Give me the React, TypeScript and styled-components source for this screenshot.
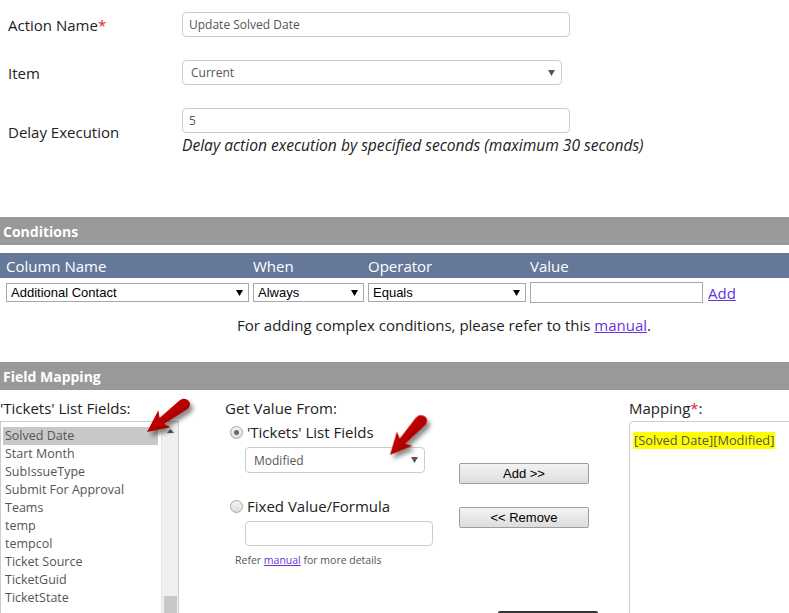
import React from "react";
import styled, { createGlobalStyle } from "styled-components";

const Global = createGlobalStyle`
  html, body { margin: 0; padding: 0; background: #fff; overflow: hidden; }
  body { font-family: "Open Sans", "Noto Sans", sans-serif; color: #333; }
  * { box-sizing: border-box; }
`;

const Page = styled.div`
  position: relative;
  width: 789px;
  height: 613px;
  overflow: hidden;
`;

const TopForm = styled.div`
  display: grid;
  grid-template-columns: 174px 1fr;
  align-items: center;
  row-gap: 23px;
  padding: 12px 0 0 8px;
`;

const Label = styled.div`
  font-size: 15px;
  line-height: 20px;
  color: #222;
`;

const Req = styled.span`
  color: #e0252d;
`;

const TextBox = styled.div<{ $w: number }>`
  width: ${(p) => p.$w}px;
  height: 25px;
  border: 1px solid #ccc;
  border-radius: 4px;
  padding: 0 6px;
  display: flex;
  align-items: center;
  font-size: 12px;
  color: #555;
  background: #fff;
`;

const RoundSelect = styled.div<{ $w: number; $h?: number }>`
  width: ${(p) => p.$w}px;
  height: ${(p) => p.$h ?? 25}px;
  border: 1px solid #ccc;
  border-radius: 4px;
  padding: 0 6px 0 8px;
  display: flex;
  align-items: center;
  justify-content: space-between;
  font-size: 12px;
  color: #555;
  background: #fff;
`;

const FieldStack = styled.div`
  display: flex;
  flex-direction: column;
`;

const Helper = styled.div`
  font-style: italic;
  font-size: 15.6px;
  line-height: 20px;
  margin-top: 2px;
  color: #222;
  white-space: nowrap;
`;

const SectionBar = styled.div<{ $mt: number }>`
  margin-top: ${(p) => p.$mt}px;
  height: 28px;
  background: #999999;
  color: #fff;
  font-weight: 700;
  font-size: 14px;
  line-height: 29px;
  padding-left: 3px;
`;

const condCols = "247px 115px 162px 1fr";

const CondHeader = styled.div`
  margin-top: 8px;
  height: 25px;
  background: #657899;
  color: #fff;
  font-size: 15px;
  display: grid;
  grid-template-columns: ${condCols};
  align-items: center;
  padding-left: 6px;
`;

const CondRow = styled.div`
  margin-top: 4px;
  display: grid;
  grid-template-columns: ${condCols};
  align-items: center;
  padding-left: 6px;
`;

const SquareSelect = styled.div<{ $w: number }>`
  width: ${(p) => p.$w}px;
  height: 19px;
  border: 1px solid #a9a9a9;
  background: #fff;
  display: flex;
  align-items: center;
  justify-content: space-between;
  padding: 0 5px 0 4px;
  font-family: "Liberation Sans", Arial, sans-serif;
  font-size: 13px;
  color: #000;
`;

const ValueCell = styled.div`
  display: flex;
  align-items: center;
`;

const PlainInput = styled.div`
  width: 173px;
  height: 21px;
  border: 1px solid #a9a9a9;
  background: #fff;
`;

const Link = styled.a`
  color: #6633dd;
  text-decoration: underline;
  cursor: pointer;
`;

const AddLink = styled(Link)`
  margin-left: 5px;
  font-size: 15px;
`;

const Note = styled.div`
  margin-top: 12px;
  padding-left: 237px;
  font-size: 15px;
  line-height: 20px;
  color: #222;
`;

const MapGrid = styled.div`
  display: grid;
  grid-template-columns: 225px 234px 170px 1fr;
  align-items: start;
  height: 230px;
`;

const Column = styled.div`
  display: flex;
  flex-direction: column;
`;

const ColLabel = styled.div<{ $ml?: number }>`
  margin-top: 9px;
  margin-left: ${(p) => p.$ml ?? 0}px;
  font-size: 15px;
  line-height: 18px;
  color: #222;
  white-space: nowrap;
`;

const ListBox = styled.div`
  margin-top: 4px;
  width: 179px;
  height: 200px;
  border: 1px solid #ccc;
  display: flex;
  overflow: hidden;
`;

const ListItems = styled.div`
  flex: 1;
  padding: 5px 0 0 2px;
`;

const ListItem = styled.div<{ $sel?: boolean }>`
  height: 18px;
  line-height: 18px;
  padding-left: 2px;
  margin-right: 3px;
  font-size: 12.5px;
  color: #555;
  background: ${(p) => (p.$sel ? "#c8c8c8" : "transparent")};
  white-space: nowrap;
`;

const ScrollBar = styled.div`
  width: 17px;
  background: #f0f0f0;
  border-left: 1px solid #e6e6e6;
  display: flex;
  flex-direction: column;
  align-items: center;
`;

const ScrollUp = styled.div`
  height: 17px;
  width: 100%;
  display: flex;
  align-items: center;
  justify-content: center;
  padding-top: 3px;
`;

const ScrollThumb = styled.div`
  margin-top: 160px;
  width: 13px;
  height: 30px;
  background: #c8c8c8;
`;

const RadioRow = styled.div<{ $mt: number }>`
  margin-top: ${(p) => p.$mt}px;
  margin-left: 5px;
  display: flex;
  align-items: center;
  gap: 4px;
  height: 18px;
  font-size: 15px;
  color: #222;
  white-space: nowrap;
`;

const Radio = styled.span<{ $checked?: boolean }>`
  width: 13px;
  height: 13px;
  border-radius: 50%;
  border: 1px solid #a6a6a6;
  background: linear-gradient(#f4f4f4, #dcdcdc);
  display: flex;
  align-items: center;
  justify-content: center;
  flex: none;
  &::after {
    content: "";
    width: 5px;
    height: 5px;
    border-radius: 50%;
    background: ${(p) => (p.$checked ? "#6a6a6a" : "transparent")};
  }
`;

const Indented = styled.div<{ $mt: number }>`
  margin-top: ${(p) => p.$mt}px;
  margin-left: 20px;
`;

const ReferText = styled.div`
  margin-top: 7px;
  margin-left: 10px;
  font-size: 10.5px;
  line-height: 14px;
  color: #555;
`;

const Button = styled.button<{ $mt: number }>`
  margin-top: ${(p) => p.$mt}px;
  width: 130px;
  height: 21px;
  border: 1px solid #9e9e9e;
  border-radius: 2px;
  background: linear-gradient(#f3f3f3, #dddddd);
  font-family: "Liberation Sans", Arial, sans-serif;
  font-size: 13px;
  color: #000;
  padding: 0;
  display: block;
`;

const DarkBar = styled.div`
  margin-top: 83px;
  margin-left: 39px;
  width: 100px;
  height: 8px;
  background: #333;
  border-radius: 2px 2px 0 0;
`;

const MappingBox = styled.div`
  margin-top: 4px;
  width: 180px;
  height: 210px;
  border: 1px solid #ccc;
  border-radius: 4px;
  padding: 6px 3px;
`;

const Mark = styled.span`
  background: #ffff00;
  font-size: 12.8px;
  line-height: 17px;
  color: #555;
  padding: 0 1px;
  display: inline-block;
  white-space: nowrap;
`;

const Overlay = styled.svg`
  position: absolute;
  left: 0;
  top: 0;
  pointer-events: none;
`;

const Caret = ({ color = "#555", w = 7 }: { color?: string; w?: number }) => (
  <svg width={w} height={w - 1} viewBox="0 0 7 6">
    <path d="M0 0 H7 L3.5 6 Z" fill={color} />
  </svg>
);

const arrowPath =
  "M0,0 L22,-11 L18.5,-4 L44,-6.5 C50,-7 52,-3 52,0 C52,3.5 49,5.5 44,5.2 L18.5,3.5 L22,10 Z";

const listFields = [
  "Solved Date",
  "Start Month",
  "SubIssueType",
  "Submit For Approval",
  "Teams",
  "temp",
  "tempcol",
  "Ticket Source",
  "TicketGuid",
  "TicketState",
];

export default function App() {
  return (
    <Page>
      <Global />
      <TopForm>
        <Label>
          Action Name<Req>*</Req>
        </Label>
        <TextBox $w={388}>Update Solved Date</TextBox>

        <Label>Item</Label>
        <RoundSelect $w={380}>
          <span>Current</span>
          <Caret color="#555" />
        </RoundSelect>

        <Label>Delay Execution</Label>
        <FieldStack>
          <TextBox $w={388}>5</TextBox>
          <Helper>Delay action execution by specified seconds (maximum 30 seconds)</Helper>
        </FieldStack>
      </TopForm>

      <SectionBar $mt={62}>Conditions</SectionBar>
      <CondHeader>
        <span>Column Name</span>
        <span>When</span>
        <span>Operator</span>
        <span>Value</span>
      </CondHeader>
      <CondRow>
        <SquareSelect $w={243}>
          <span>Additional Contact</span>
          <Caret color="#000" />
        </SquareSelect>
        <SquareSelect $w={111}>
          <span>Always</span>
          <Caret color="#000" />
        </SquareSelect>
        <SquareSelect $w={158}>
          <span>Equals</span>
          <Caret color="#000" />
        </SquareSelect>
        <ValueCell>
          <PlainInput />
          <AddLink>Add</AddLink>
        </ValueCell>
      </CondRow>
      <Note>
        For adding complex conditions, please refer to this <Link>manual</Link>.
      </Note>

      <SectionBar $mt={27}>Field Mapping</SectionBar>
      <MapGrid>
        <Column>
          <ColLabel>'Tickets' List Fields:</ColLabel>
          <ListBox>
            <ListItems>
              {listFields.map((f, i) => (
                <ListItem key={f} $sel={i === 0}>
                  {f}
                </ListItem>
              ))}
            </ListItems>
            <ScrollBar>
              <ScrollUp>
                <svg width="7" height="4" viewBox="0 0 7 4">
                  <path d="M0 4 L3.5 0 L7 4 Z" fill="#555" />
                </svg>
              </ScrollUp>
              <ScrollThumb />
            </ScrollBar>
          </ListBox>
        </Column>

        <Column>
          <ColLabel>Get Value From:</ColLabel>
          <RadioRow $mt={6}>
            <Radio $checked />
            <span>'Tickets' List Fields</span>
          </RadioRow>
          <Indented $mt={6}>
            <RoundSelect $w={180} $h={26}>
              <span>Modified</span>
              <Caret color="#555" />
            </RoundSelect>
          </Indented>
          <RadioRow $mt={24}>
            <Radio />
            <span>Fixed Value/Formula</span>
          </RadioRow>
          <Indented $mt={6}>
            <TextBox $w={188} />
          </Indented>
          <ReferText>
            Refer <Link>manual</Link> for more details
          </ReferText>
        </Column>

        <Column>
          <Button $mt={73}>Add &gt;&gt;</Button>
          <Button $mt={23}>&lt;&lt; Remove</Button>
          <DarkBar />
        </Column>

        <Column>
          <ColLabel>
            Mapping<Req>*</Req>:
          </ColLabel>
          <MappingBox>
            <Mark>[Solved Date][Modified]</Mark>
          </MappingBox>
        </Column>
      </MapGrid>

      <Overlay width={789} height={613} viewBox="0 0 789 613">
        <defs>
          <linearGradient id="redg" x1="0" y1="-1" x2="0" y2="1" gradientUnits="objectBoundingBox">
            <stop offset="0" stopColor="#e01818" />
            <stop offset="0.6" stopColor="#c30000" />
            <stop offset="1" stopColor="#a00000" />
          </linearGradient>
          <filter id="shadow" x="-30%" y="-30%" width="160%" height="160%">
            <feDropShadow dx="3" dy="4" stdDeviation="2.2" floodColor="#000" floodOpacity="0.45" />
          </filter>
        </defs>
        <g filter="url(#shadow)">
          <path d={arrowPath} fill="url(#redg)" transform="translate(147,432) rotate(-36)" />
          <path d={arrowPath} fill="url(#redg)" transform="translate(390,455) rotate(-47)" />
        </g>
      </Overlay>
    </Page>
  );
}
